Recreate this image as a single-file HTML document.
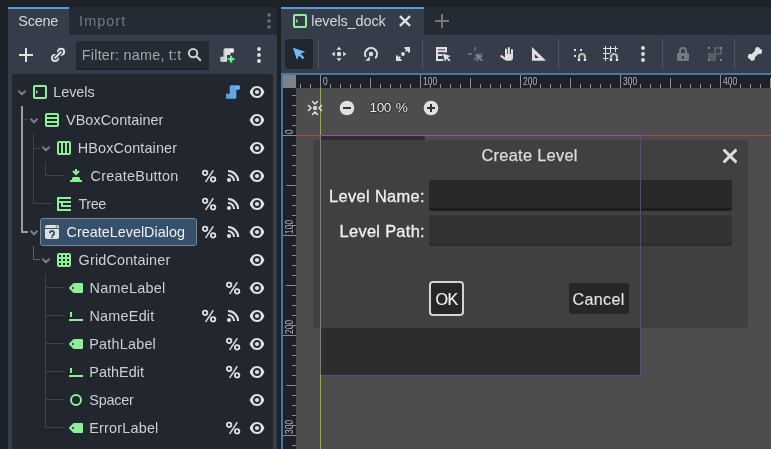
<!DOCTYPE html>
<html><head><meta charset="utf-8"><title>levels_dock</title>
<style>
html,body{margin:0;padding:0}
body{width:771px;height:449px;overflow:hidden;background:#1d2229;position:relative;font-family:"Liberation Sans",sans-serif;color:#cdcfd2}
.a{position:absolute}
.ic{position:absolute;overflow:visible}
.tl{position:absolute;font-size:14.6px;line-height:22px;white-space:nowrap;color:#cdcfd2}
.selt{color:#eef0f3}
.sel{position:absolute;box-sizing:border-box;background:#36506b;border:1px solid #7c8590;border-radius:3px}
.ln{position:absolute;background:#3f444c}
.lb{position:absolute;background:#9a9da2}
.lm{position:absolute;background:#5d6168}
.sep{position:absolute;width:1px;top:39px;height:30px;background:#4e5563}
.tk{position:absolute;background:#8b8d91}
.rn{position:absolute;font-size:10.300px;line-height:10px;color:#b4b6ba}
#w{position:absolute;left:0;top:0;width:771px;height:449px;will-change:transform}
</style></head><body><div id="w">

<!-- left dock -->
<div class="a" style="left:8px;top:7px;width:269px;height:28px;background:#252b34;border-radius:3px 3px 0 0"></div>
<div class="a" style="left:8px;top:35px;width:269px;height:414px;background:#363d4a"></div>
<div class="a" style="left:8px;top:7px;width:61px;height:28px;background:#363d4a;border-top:2px solid #5b9bd8;box-sizing:border-box"></div>
<span class="a" style="left:18.3px;top:11.0px;font-size:14.4px;line-height:20px;letter-spacing:-0.225px;color:#d6d8db;white-space:nowrap;">Scene</span>
<span class="a" style="left:79.1px;top:11.0px;font-size:14.4px;line-height:20px;letter-spacing:1.06px;color:#747982;white-space:nowrap;">Import</span>
<svg class="ic" style="left:261px;top:13px" width="16" height="16" viewBox="0 0 16 16"><circle cx="8" cy="2" r="1.800" fill="#6d7178"/><circle cx="8" cy="8" r="1.800" fill="#6d7178"/><circle cx="8" cy="14" r="1.800" fill="#6d7178"/></svg>

<!-- scene toolbar -->
<svg class="ic" style="left:18px;top:47px" width="16" height="16" viewBox="0 0 16 16"><path d="M7 1v6H1v2h6v6h2V9h6V7H9V1z" fill="#e0e0e0"/></svg>
<svg class="ic" style="left:50px;top:47px" width="16" height="16" viewBox="0 0 16 16"><g fill="none" stroke-linecap="round"><circle cx="11.100" cy="4.800" r="3" stroke="#e0e0e0" stroke-width="2"/><circle cx="5" cy="11" r="3" stroke="#e0e0e0" stroke-width="2"/><path d="M5.300 10.700 10.800 5.100" stroke="#363d4a" stroke-width="4.200"/><path d="M5.300 10.700 10.800 5.100" stroke="#e0e0e0" stroke-width="2"/></g></svg>
<div class="a" style="left:76px;top:41px;width:133px;height:29px;background:#252b34;border-radius:3px 3px 2px 2px;border-bottom:2px solid #1e232b;box-sizing:border-box"></div>
<span class="a" style="left:81.8px;top:45.0px;font-size:14.4px;line-height:20px;letter-spacing:0.219px;color:#a3a6ac;white-space:nowrap;">Filter: name, t:t</span>
<svg class="ic" style="left:187px;top:47px" width="16" height="16" viewBox="0 0 16 16"><circle cx="6.100" cy="6.100" r="4.200" fill="none" stroke="#cfd1d4" stroke-width="2"/><path d="M9.300 9.300 13.300 13.300" stroke="#cfd1d4" stroke-width="2" stroke-linecap="round"/></svg>
<svg class="ic" style="left:219px;top:47px" width="16" height="16" viewBox="0 0 16 16"><path d="M6.200 1.300H13.800a1.200 1.200 0 0 1 1.200 1.200V5.500H11.400V8H8v6.700H2.600a1.200 1.200 0 0 1-1.200-1.200V9.800H4.700V2.800a1.500 1.500 0 0 1 1.500-1.500z" fill="#e0e0e0"/><path d="M11.400 2.500h2.400v3h-2.400z" fill="#f6f6f6"/><path d="M4.700 2.800v9.900h1.700V2.300z" fill="#cdcdcd"/><path d="M2.600 11h2.100v2.500h-2.100z" fill="#bdbdbd"/><path d="M11 8.800v2.200H8.800v2.200H11v2.200h2.200v-2.200h2.200v-2.200h-2.200V8.800z" fill="#66f07c"/></svg>
<svg class="ic" style="left:251px;top:47px" width="16" height="16" viewBox="0 0 16 16"><circle cx="8" cy="2" r="1.900" fill="#e0e0e0"/><circle cx="8" cy="8" r="1.900" fill="#e0e0e0"/><circle cx="8" cy="14" r="1.900" fill="#e0e0e0"/></svg>

<!-- tree -->
<div class="a" style="left:12px;top:74px;width:261px;height:380px;background:#21262f;border-radius:3px"></div>
<!-- relationship lines -->
<div class="lb" style="left:21px;top:106px;width:2px;height:127px"></div>
<div class="lb" style="left:21px;top:231px;width:7px;height:2px"></div>
<div class="ln" style="left:23px;top:119px;width:5px;height:1px"></div>
<div class="ln" style="left:33px;top:134px;width:1px;height:70px"></div>
<div class="ln" style="left:33px;top:148px;width:7px;height:1px"></div>
<div class="ln" style="left:33px;top:203px;width:19px;height:1px"></div>
<div class="ln" style="left:45px;top:162px;width:1px;height:14px"></div>
<div class="ln" style="left:45px;top:175px;width:19px;height:1px"></div>
<div class="lm" style="left:33px;top:246px;width:1px;height:14px"></div>
<div class="lm" style="left:33px;top:259px;width:7px;height:1px"></div>
<div class="ln" style="left:45px;top:274px;width:1px;height:154px"></div>
<div class="ln" style="left:45px;top:287px;width:19px;height:1px"></div>
<div class="ln" style="left:45px;top:315px;width:19px;height:1px"></div>
<div class="ln" style="left:45px;top:343px;width:19px;height:1px"></div>
<div class="ln" style="left:45px;top:371px;width:19px;height:1px"></div>
<div class="ln" style="left:45px;top:399px;width:19px;height:1px"></div>
<div class="ln" style="left:45px;top:427px;width:19px;height:1px"></div>
<svg class="ic" style="left:14px;top:84px" width="16" height="16" viewBox="0 0 16 16"><path d="M5 7.200 8 10.200l3-3" fill="none" stroke="#7b7f86" stroke-width="2" stroke-linecap="round" stroke-linejoin="round"/></svg>
<svg class="ic" style="left:32px;top:84px" width="16" height="16" viewBox="0 0 16 16" ><path d="M3 1a2 2 0 0 0-2 2v10a2 2 0 0 0 2 2h10a2 2 0 0 0 2-2V3a2 2 0 0 0-2-2zm0 2h10v10H3zm1 3v4l2-2z" fill="#8eef97"/></svg>
<span class="a" style="left:53.3px;top:82.0px;font-size:14.4px;line-height:20px;letter-spacing:-0.06px;color:#cdcfd2;white-space:nowrap;">Levels</span>
<svg class="ic" style="left:249px;top:84px" width="16" height="16" viewBox="0 0 16 16" ><path d="M8 2C4.600 2 2.200 4.300 .8 7.600a1 1 0 0 0 0 .8C2.200 11.700 4.600 14 8 14s5.800-2.300 7.200-5.600a1 1 0 0 0 0-.8C13.800 4.300 11.400 2 8 2zm0 2.100a3.900 3.900 0 0 1 0 7.800 3.900 3.900 0 0 1 0-7.800zm0 1.800a2.100 2.100 0 0 0 0 4.200 2.100 2.100 0 0 0 0-4.200z" fill="#e0e0e0"/></svg>
<svg class="ic" style="left:225px;top:84px" width="16" height="16" viewBox="0 0 16 16" ><path d="M6.200 1.300H13.800a1.200 1.200 0 0 1 1.200 1.200V5.500H11.400V13.200a1.500 1.500 0 0 1-1.500 1.500H2.200a1.200 1.200 0 0 1-1.200-1.200V9.800H4.700V2.800a1.500 1.500 0 0 1 1.500-1.500z" fill="#5fa8e6"/><path d="M11.400 2.500h2.400v3h-2.400z" fill="#7dbcf2"/><path d="M2.200 11h2.500v2.500h-2.500z" fill="#4f93cf"/></svg>
<svg class="ic" style="left:26px;top:112px" width="16" height="16" viewBox="0 0 16 16"><path d="M5 7.200 8 10.200l3-3" fill="none" stroke="#7b7f86" stroke-width="2" stroke-linecap="round" stroke-linejoin="round"/></svg>
<svg class="ic" style="left:44px;top:112px" width="16" height="16" viewBox="0 0 16 16" ><path d="M3 1a2 2 0 0 0-2 2v10a2 2 0 0 0 2 2h10a2 2 0 0 0 2-2V3a2 2 0 0 0-2-2zm0 2h10v2H3zm0 4h10v2H3zm0 4h10v2H3z" fill="#8eef97"/></svg>
<span class="a" style="left:66.1px;top:110.0px;font-size:14.4px;line-height:20px;letter-spacing:0.042px;color:#cdcfd2;white-space:nowrap;">VBoxContainer</span>
<svg class="ic" style="left:249px;top:112px" width="16" height="16" viewBox="0 0 16 16" ><path d="M8 2C4.600 2 2.200 4.300 .8 7.600a1 1 0 0 0 0 .8C2.200 11.700 4.600 14 8 14s5.800-2.300 7.200-5.600a1 1 0 0 0 0-.8C13.800 4.300 11.400 2 8 2zm0 2.100a3.900 3.900 0 0 1 0 7.800 3.900 3.900 0 0 1 0-7.800zm0 1.800a2.100 2.100 0 0 0 0 4.200 2.100 2.100 0 0 0 0-4.200z" fill="#e0e0e0"/></svg>
<svg class="ic" style="left:38px;top:140px" width="16" height="16" viewBox="0 0 16 16"><path d="M5 7.200 8 10.200l3-3" fill="none" stroke="#7b7f86" stroke-width="2" stroke-linecap="round" stroke-linejoin="round"/></svg>
<svg class="ic" style="left:56px;top:140px" width="16" height="16" viewBox="0 0 16 16" ><path d="M3 1a2 2 0 0 0-2 2v10a2 2 0 0 0 2 2h10a2 2 0 0 0 2-2V3a2 2 0 0 0-2-2zm0 2h2v10H3zm4 0h2v10H7zm4 0h2v10h-2z" fill="#8eef97"/></svg>
<span class="a" style="left:77.8px;top:138.0px;font-size:14.4px;line-height:20px;letter-spacing:0.133px;color:#cdcfd2;white-space:nowrap;">HBoxContainer</span>
<svg class="ic" style="left:249px;top:140px" width="16" height="16" viewBox="0 0 16 16" ><path d="M8 2C4.600 2 2.200 4.300 .8 7.600a1 1 0 0 0 0 .8C2.200 11.700 4.600 14 8 14s5.800-2.300 7.200-5.600a1 1 0 0 0 0-.8C13.800 4.300 11.400 2 8 2zm0 2.100a3.900 3.900 0 0 1 0 7.800 3.900 3.900 0 0 1 0-7.800zm0 1.800a2.100 2.100 0 0 0 0 4.200 2.100 2.100 0 0 0 0-4.200z" fill="#e0e0e0"/></svg>
<svg class="ic" style="left:68px;top:168px" width="16" height="16" viewBox="0 0 16 16" ><path d="M7 1v2.586L5.707 2.293 4.293 3.707 8 7.414l3.707-3.707-1.414-1.414L9 3.586V1zM5.500 9A1.500 1.500 0 0 0 4 10.500V12H2.500a.5.500 0 0 0-.5.500V14h12v-1.500a.5.500 0 0 0-.5-.5H12v-1.500A1.500 1.500 0 0 0 10.500 9z" fill="#8eef97"/></svg>
<span class="a" style="left:90.5px;top:166.0px;font-size:14.4px;line-height:20px;letter-spacing:0.273px;color:#cdcfd2;white-space:nowrap;">CreateButton</span>
<svg class="ic" style="left:249px;top:168px" width="16" height="16" viewBox="0 0 16 16" ><path d="M8 2C4.600 2 2.200 4.300 .8 7.600a1 1 0 0 0 0 .8C2.200 11.700 4.600 14 8 14s5.800-2.300 7.200-5.600a1 1 0 0 0 0-.8C13.800 4.300 11.400 2 8 2zm0 2.100a3.900 3.900 0 0 1 0 7.800 3.900 3.900 0 0 1 0-7.800zm0 1.800a2.100 2.100 0 0 0 0 4.200 2.100 2.100 0 0 0 0-4.200z" fill="#e0e0e0"/></svg>
<svg class="ic" style="left:225px;top:168px" width="16" height="16" viewBox="0 0 16 16" ><path d="M3 2v2a9 9 0 0 1 9 9h2.200A11.200 11.200 0 0 0 3 2zm0 4v2a5 5 0 0 1 5 5h2.100a7.100 7.100 0 0 0-7.100-7z" fill="#e0e0e0"/><circle cx="4" cy="12" r="2.100" fill="#e0e0e0"/></svg>
<svg class="ic" style="left:201px;top:168px" width="16" height="16" viewBox="0 0 16 16" ><path d="M11.600 2.100 13 2.600 5.300 14.300 3.900 13.800z" fill="#e0e0e0"/><circle cx="4.100" cy="4.800" r="2.250" fill="none" stroke="#e0e0e0" stroke-width="1.800"/><circle cx="12.100" cy="11.300" r="2.250" fill="none" stroke="#e0e0e0" stroke-width="1.800"/></svg>
<svg class="ic" style="left:56px;top:196px" width="16" height="16" viewBox="0 0 16 16" ><path d="M1 1v14h14v-2H3V7h2v4h10V9H7V7h8V5H3V3h12V1z" fill="#8eef97"/></svg>
<span class="a" style="left:78.4px;top:194.0px;font-size:14.4px;line-height:20px;letter-spacing:-0.4px;color:#cdcfd2;white-space:nowrap;">Tree</span>
<svg class="ic" style="left:249px;top:196px" width="16" height="16" viewBox="0 0 16 16" ><path d="M8 2C4.600 2 2.200 4.300 .8 7.600a1 1 0 0 0 0 .8C2.200 11.700 4.600 14 8 14s5.800-2.300 7.200-5.600a1 1 0 0 0 0-.8C13.800 4.300 11.400 2 8 2zm0 2.100a3.900 3.900 0 0 1 0 7.800 3.900 3.900 0 0 1 0-7.800zm0 1.800a2.100 2.100 0 0 0 0 4.200 2.100 2.100 0 0 0 0-4.200z" fill="#e0e0e0"/></svg>
<svg class="ic" style="left:225px;top:196px" width="16" height="16" viewBox="0 0 16 16" ><path d="M3 2v2a9 9 0 0 1 9 9h2.200A11.200 11.200 0 0 0 3 2zm0 4v2a5 5 0 0 1 5 5h2.100a7.100 7.100 0 0 0-7.100-7z" fill="#e0e0e0"/><circle cx="4" cy="12" r="2.100" fill="#e0e0e0"/></svg>
<svg class="ic" style="left:201px;top:196px" width="16" height="16" viewBox="0 0 16 16" ><path d="M11.600 2.100 13 2.600 5.300 14.300 3.900 13.800z" fill="#e0e0e0"/><circle cx="4.100" cy="4.800" r="2.250" fill="none" stroke="#e0e0e0" stroke-width="1.800"/><circle cx="12.100" cy="11.300" r="2.250" fill="none" stroke="#e0e0e0" stroke-width="1.800"/></svg>
<div class="sel" style="left:40px;top:218px;width:157px;height:28px"></div>
<svg class="ic" style="left:26px;top:224px" width="16" height="16" viewBox="0 0 16 16"><path d="M5 7.200 8 10.200l3-3" fill="none" stroke="#7b7f86" stroke-width="2" stroke-linecap="round" stroke-linejoin="round"/></svg>
<svg class="ic" style="left:44px;top:224px" width="16" height="16" viewBox="0 0 16 16" ><path d="M3 1a2 2 0 0 0-2 2v1h14V3a2 2 0 0 0-2-2zM1 5v8a2 2 0 0 0 2 2h10a2 2 0 0 0 2-2V5z" fill="#e0e0e0"/><circle cx="12.400" cy="2.500" r=".8" fill="#36506b"/><path d="M5.900 9.200a2.100 2.100 0 1 1 3.500 1.500C8.600 11.300 8 11.600 8 12.400" fill="none" stroke="#36506b" stroke-width="1.900"/><rect x="6.900" y="13" width="2.200" height="1" rx=".4" fill="#36506b"/></svg>
<span class="a" style="left:66.5px;top:222.0px;font-size:14.4px;line-height:20px;letter-spacing:0.0px;color:#eef0f3;white-space:nowrap;">CreateLevelDialog</span>
<svg class="ic" style="left:249px;top:224px" width="16" height="16" viewBox="0 0 16 16" ><path d="M8 2C4.600 2 2.200 4.300 .8 7.600a1 1 0 0 0 0 .8C2.200 11.700 4.600 14 8 14s5.800-2.300 7.200-5.600a1 1 0 0 0 0-.8C13.800 4.300 11.400 2 8 2zm0 2.100a3.900 3.900 0 0 1 0 7.800 3.900 3.900 0 0 1 0-7.800zm0 1.800a2.100 2.100 0 0 0 0 4.200 2.100 2.100 0 0 0 0-4.200z" fill="#e0e0e0"/></svg>
<svg class="ic" style="left:225px;top:224px" width="16" height="16" viewBox="0 0 16 16" ><path d="M3 2v2a9 9 0 0 1 9 9h2.200A11.200 11.200 0 0 0 3 2zm0 4v2a5 5 0 0 1 5 5h2.100a7.100 7.100 0 0 0-7.100-7z" fill="#e0e0e0"/><circle cx="4" cy="12" r="2.100" fill="#e0e0e0"/></svg>
<svg class="ic" style="left:201px;top:224px" width="16" height="16" viewBox="0 0 16 16" ><path d="M11.600 2.100 13 2.600 5.300 14.300 3.900 13.800z" fill="#e0e0e0"/><circle cx="4.100" cy="4.800" r="2.250" fill="none" stroke="#e0e0e0" stroke-width="1.800"/><circle cx="12.100" cy="11.300" r="2.250" fill="none" stroke="#e0e0e0" stroke-width="1.800"/></svg>
<svg class="ic" style="left:38px;top:252px" width="16" height="16" viewBox="0 0 16 16"><path d="M5 7.200 8 10.200l3-3" fill="none" stroke="#7b7f86" stroke-width="2" stroke-linecap="round" stroke-linejoin="round"/></svg>
<svg class="ic" style="left:56px;top:252px" width="16" height="16" viewBox="0 0 16 16" ><path d="M3 1a2 2 0 0 0-2 2v10a2 2 0 0 0 2 2h10a2 2 0 0 0 2-2V3a2 2 0 0 0-2-2zm0 2h2v2H3zm4 0h2v2H7zm4 0h2v2h-2zM3 7h2v2H3zm4 0h2v2H7zm4 0h2v2h-2zm-8 4h2v2H3zm4 0h2v2H7zm4 0h2v2h-2z" fill="#8eef97"/></svg>
<span class="a" style="left:78.6px;top:250.0px;font-size:14.4px;line-height:20px;letter-spacing:0.167px;color:#cdcfd2;white-space:nowrap;">GridContainer</span>
<svg class="ic" style="left:249px;top:252px" width="16" height="16" viewBox="0 0 16 16" ><path d="M8 2C4.600 2 2.200 4.300 .8 7.600a1 1 0 0 0 0 .8C2.200 11.700 4.600 14 8 14s5.800-2.300 7.200-5.600a1 1 0 0 0 0-.8C13.800 4.300 11.400 2 8 2zm0 2.100a3.900 3.900 0 0 1 0 7.800 3.900 3.900 0 0 1 0-7.800zm0 1.800a2.100 2.100 0 0 0 0 4.200 2.100 2.100 0 0 0 0-4.200z" fill="#e0e0e0"/></svg>
<svg class="ic" style="left:68px;top:280px" width="16" height="16" viewBox="0 0 16 16" ><path d="M6 3a1 1 0 0 0-.707.293l-4 4a1 1 0 0 0 0 1.414l4 4A1 1 0 0 0 6 13h8a1 1 0 0 0 1-1V4a1 1 0 0 0-1-1zM5 7a1 1 0 0 1 0 2 1 1 0 0 1 0-2z" fill="#8eef97"/></svg>
<span class="a" style="left:89.5px;top:278.0px;font-size:14.4px;line-height:20px;letter-spacing:0.25px;color:#cdcfd2;white-space:nowrap;">NameLabel</span>
<svg class="ic" style="left:249px;top:280px" width="16" height="16" viewBox="0 0 16 16" ><path d="M8 2C4.600 2 2.200 4.300 .8 7.600a1 1 0 0 0 0 .8C2.200 11.700 4.600 14 8 14s5.800-2.300 7.200-5.600a1 1 0 0 0 0-.8C13.800 4.300 11.400 2 8 2zm0 2.100a3.900 3.900 0 0 1 0 7.800 3.900 3.900 0 0 1 0-7.800zm0 1.800a2.100 2.100 0 0 0 0 4.200 2.100 2.100 0 0 0 0-4.200z" fill="#e0e0e0"/></svg>
<svg class="ic" style="left:225px;top:280px" width="16" height="16" viewBox="0 0 16 16" ><path d="M11.600 2.100 13 2.600 5.300 14.300 3.900 13.800z" fill="#e0e0e0"/><circle cx="4.100" cy="4.800" r="2.250" fill="none" stroke="#e0e0e0" stroke-width="1.800"/><circle cx="12.100" cy="11.300" r="2.250" fill="none" stroke="#e0e0e0" stroke-width="1.800"/></svg>
<svg class="ic" style="left:68px;top:308px" width="16" height="16" viewBox="0 0 16 16" ><path d="M2 4v5h2V4zM1 11v2h14v-2z" fill="#8eef97"/></svg>
<span class="a" style="left:89.5px;top:306.0px;font-size:14.4px;line-height:20px;letter-spacing:0.229px;color:#cdcfd2;white-space:nowrap;">NameEdit</span>
<svg class="ic" style="left:249px;top:308px" width="16" height="16" viewBox="0 0 16 16" ><path d="M8 2C4.600 2 2.200 4.300 .8 7.600a1 1 0 0 0 0 .8C2.200 11.700 4.600 14 8 14s5.800-2.300 7.200-5.600a1 1 0 0 0 0-.8C13.800 4.300 11.400 2 8 2zm0 2.100a3.900 3.900 0 0 1 0 7.800 3.900 3.900 0 0 1 0-7.800zm0 1.800a2.100 2.100 0 0 0 0 4.200 2.100 2.100 0 0 0 0-4.200z" fill="#e0e0e0"/></svg>
<svg class="ic" style="left:225px;top:308px" width="16" height="16" viewBox="0 0 16 16" ><path d="M3 2v2a9 9 0 0 1 9 9h2.200A11.200 11.200 0 0 0 3 2zm0 4v2a5 5 0 0 1 5 5h2.100a7.100 7.100 0 0 0-7.100-7z" fill="#e0e0e0"/><circle cx="4" cy="12" r="2.100" fill="#e0e0e0"/></svg>
<svg class="ic" style="left:201px;top:308px" width="16" height="16" viewBox="0 0 16 16" ><path d="M11.600 2.100 13 2.600 5.300 14.300 3.900 13.800z" fill="#e0e0e0"/><circle cx="4.100" cy="4.800" r="2.250" fill="none" stroke="#e0e0e0" stroke-width="1.800"/><circle cx="12.100" cy="11.300" r="2.250" fill="none" stroke="#e0e0e0" stroke-width="1.800"/></svg>
<svg class="ic" style="left:68px;top:336px" width="16" height="16" viewBox="0 0 16 16" ><path d="M6 3a1 1 0 0 0-.707.293l-4 4a1 1 0 0 0 0 1.414l4 4A1 1 0 0 0 6 13h8a1 1 0 0 0 1-1V4a1 1 0 0 0-1-1zM5 7a1 1 0 0 1 0 2 1 1 0 0 1 0-2z" fill="#8eef97"/></svg>
<span class="a" style="left:89.3px;top:334.0px;font-size:14.4px;line-height:20px;letter-spacing:0.213px;color:#cdcfd2;white-space:nowrap;">PathLabel</span>
<svg class="ic" style="left:249px;top:336px" width="16" height="16" viewBox="0 0 16 16" ><path d="M8 2C4.600 2 2.200 4.300 .8 7.600a1 1 0 0 0 0 .8C2.200 11.700 4.600 14 8 14s5.800-2.300 7.200-5.600a1 1 0 0 0 0-.8C13.800 4.300 11.400 2 8 2zm0 2.100a3.900 3.900 0 0 1 0 7.800 3.900 3.900 0 0 1 0-7.800zm0 1.800a2.100 2.100 0 0 0 0 4.200 2.100 2.100 0 0 0 0-4.200z" fill="#e0e0e0"/></svg>
<svg class="ic" style="left:225px;top:336px" width="16" height="16" viewBox="0 0 16 16" ><path d="M11.600 2.100 13 2.600 5.300 14.300 3.900 13.800z" fill="#e0e0e0"/><circle cx="4.100" cy="4.800" r="2.250" fill="none" stroke="#e0e0e0" stroke-width="1.800"/><circle cx="12.100" cy="11.300" r="2.250" fill="none" stroke="#e0e0e0" stroke-width="1.800"/></svg>
<svg class="ic" style="left:68px;top:364px" width="16" height="16" viewBox="0 0 16 16" ><path d="M2 4v5h2V4zM1 11v2h14v-2z" fill="#8eef97"/></svg>
<span class="a" style="left:89.3px;top:362.0px;font-size:14.4px;line-height:20px;letter-spacing:0.043px;color:#cdcfd2;white-space:nowrap;">PathEdit</span>
<svg class="ic" style="left:249px;top:364px" width="16" height="16" viewBox="0 0 16 16" ><path d="M8 2C4.600 2 2.200 4.300 .8 7.600a1 1 0 0 0 0 .8C2.200 11.700 4.600 14 8 14s5.800-2.300 7.200-5.600a1 1 0 0 0 0-.8C13.800 4.300 11.400 2 8 2zm0 2.100a3.900 3.900 0 0 1 0 7.800 3.900 3.900 0 0 1 0-7.800zm0 1.800a2.100 2.100 0 0 0 0 4.200 2.100 2.100 0 0 0 0-4.200z" fill="#e0e0e0"/></svg>
<svg class="ic" style="left:225px;top:364px" width="16" height="16" viewBox="0 0 16 16" ><path d="M11.600 2.100 13 2.600 5.300 14.300 3.900 13.800z" fill="#e0e0e0"/><circle cx="4.100" cy="4.800" r="2.250" fill="none" stroke="#e0e0e0" stroke-width="1.800"/><circle cx="12.100" cy="11.300" r="2.250" fill="none" stroke="#e0e0e0" stroke-width="1.800"/></svg>
<svg class="ic" style="left:68px;top:392px" width="16" height="16" viewBox="0 0 16 16" ><path d="M8 2a6 6 0 0 0 0 12A6 6 0 0 0 8 2zm0 2a4 4 0 0 1 0 8 4 4 0 0 1 0-8z" fill="#8eef97"/></svg>
<span class="a" style="left:89.3px;top:390.0px;font-size:14.4px;line-height:20px;letter-spacing:-0.2px;color:#cdcfd2;white-space:nowrap;">Spacer</span>
<svg class="ic" style="left:249px;top:392px" width="16" height="16" viewBox="0 0 16 16" ><path d="M8 2C4.600 2 2.200 4.300 .8 7.600a1 1 0 0 0 0 .8C2.200 11.700 4.600 14 8 14s5.800-2.300 7.200-5.600a1 1 0 0 0 0-.8C13.800 4.300 11.400 2 8 2zm0 2.100a3.900 3.900 0 0 1 0 7.800 3.900 3.900 0 0 1 0-7.800zm0 1.800a2.100 2.100 0 0 0 0 4.200 2.100 2.100 0 0 0 0-4.200z" fill="#e0e0e0"/></svg>
<svg class="ic" style="left:68px;top:420px" width="16" height="16" viewBox="0 0 16 16" ><path d="M6 3a1 1 0 0 0-.707.293l-4 4a1 1 0 0 0 0 1.414l4 4A1 1 0 0 0 6 13h8a1 1 0 0 0 1-1V4a1 1 0 0 0-1-1zM5 7a1 1 0 0 1 0 2 1 1 0 0 1 0-2z" fill="#8eef97"/></svg>
<span class="a" style="left:89.3px;top:418.0px;font-size:14.4px;line-height:20px;letter-spacing:0.2px;color:#cdcfd2;white-space:nowrap;">ErrorLabel</span>
<svg class="ic" style="left:249px;top:420px" width="16" height="16" viewBox="0 0 16 16" ><path d="M8 2C4.600 2 2.200 4.300 .8 7.600a1 1 0 0 0 0 .8C2.200 11.700 4.600 14 8 14s5.800-2.300 7.200-5.600a1 1 0 0 0 0-.8C13.800 4.300 11.400 2 8 2zm0 2.100a3.900 3.900 0 0 1 0 7.800 3.900 3.900 0 0 1 0-7.800zm0 1.800a2.100 2.100 0 0 0 0 4.200 2.100 2.100 0 0 0 0-4.200z" fill="#e0e0e0"/></svg>
<svg class="ic" style="left:225px;top:420px" width="16" height="16" viewBox="0 0 16 16" ><path d="M11.600 2.100 13 2.600 5.300 14.300 3.900 13.800z" fill="#e0e0e0"/><circle cx="4.100" cy="4.800" r="2.250" fill="none" stroke="#e0e0e0" stroke-width="1.800"/><circle cx="12.100" cy="11.300" r="2.250" fill="none" stroke="#e0e0e0" stroke-width="1.800"/></svg>

<!-- main area -->
<div class="a" style="left:281px;top:7px;width:490px;height:28px;background:#252b34"></div>
<div class="a" style="left:281px;top:7px;width:143px;height:28px;background:#363d4a;border-top:2px solid #5b9bd8;box-sizing:border-box"></div>
<svg class="ic" style="left:292px;top:13px" width="16" height="16" viewBox="0 0 16 16"><path d="M3 1a2 2 0 0 0-2 2v10a2 2 0 0 0 2 2h10a2 2 0 0 0 2-2V3a2 2 0 0 0-2-2zm0 2h10v10H3zm1 3v4l2-2z" fill="#8eef97"/></svg>
<span class="a" style="left:311.3px;top:11.2px;font-size:14.4px;line-height:20px;letter-spacing:-0.08px;color:#d6d8db;white-space:nowrap;">levels_dock</span>
<svg class="ic" style="left:397px;top:13px" width="16" height="16" viewBox="0 0 16 16"><path d="M2.900 3.100 13.100 12.900M13.100 3.100 2.900 12.900" stroke="#e0e0e0" stroke-width="2.200" fill="none"/></svg>
<svg class="ic" style="left:434px;top:13px" width="16" height="16" viewBox="0 0 16 16"><path d="M7 1v6H1v2h6v6h2V9h6V7H9V1z" fill="#747678"/></svg>
<div class="a" style="left:281px;top:35px;width:490px;height:38px;background:#363d4a"></div>
<div class="a" style="left:285px;top:39px;width:28px;height:30px;background:#21262f;border-radius:3px"></div>
<!-- toolbar icons -->
<svg class="ic" style="left:291px;top:46px" width="16" height="16" viewBox="0 0 16 16"><path d="M2 1.800 6 14l1.900-4.600 3.800 3.800 1.700-1.700-3.800-3.800L14.200 5.800z" fill="#70bafa"/></svg>
<div class="sep" style="left:318px"></div>
<svg class="ic" style="left:331px;top:46px" width="16" height="16" viewBox="0 0 16 16"><path d="M8 .8 5.400 3.800h5.200zM8 15.200 10.600 12.200H5.400zM.8 8 3.800 10.600V5.400zM15.200 8 12.200 5.400v5.200z" fill="#e0e0e0"/><circle cx="8" cy="8" r="2.200" fill="#e0e0e0"/></svg>
<svg class="ic" style="left:363px;top:46px" width="16" height="16" viewBox="0 0 16 16"><path d="M2.800 11A6 6 0 1 1 12.240 12.240" fill="none" stroke="#e0e0e0" stroke-width="2"/><path d="M2.300 14.800H6.800V10.300z" fill="#e0e0e0"/><circle cx="8" cy="8" r="2.200" fill="#e0e0e0"/></svg>
<svg class="ic" style="left:395px;top:46px" width="16" height="16" viewBox="0 0 16 16"><path d="M9.500 1v2h2.100L10 4.600 11.400 6 13 4.400V6.500h2V1zM1 9.500V15h5.500v-2H4.400L6 11.400 4.600 10 3 11.600V9.500z" fill="#e0e0e0"/><circle cx="8" cy="8" r="1.900" fill="#e0e0e0"/></svg>
<div class="sep" style="left:422px"></div>
<svg class="ic" style="left:435px;top:46px" width="16" height="16" viewBox="0 0 16 16"><path d="M1 1h11v2.200H1zM1 1h2v14H1zM10 1h2v5.400h-2zM1 4.300h11v2H1zM1 8h7v2H1zM1 13h7.500v2H1z" fill="#e0e0e0"/><path d="M7.700 7.500l2.400 8.200 1.400-2.900 2.700 2.700 1.300-1.300-2.700-2.700 2.900-1.400z" fill="#e0e0e0" stroke="#363d4a" stroke-width="1.400" paint-order="stroke"/></svg>
<svg class="ic" style="left:467px;top:46px" width="16" height="16" viewBox="0 0 16 16"><path d="M7.200 1h1.700v4H7.200zM1 7.100h4v1.800H1zM11.500 7.100h3.700v1.800h-3.700zM7.200 11.200h1.700v3.600H7.200z" fill="#666b75"/><path d="M8.200 7.500l2.400 8.200 1.400-2.900 2.700 2.700 1.300-1.300-2.700-2.700 2.900-1.400z" fill="#7c818a" stroke="#363d4a" stroke-width="1.200" paint-order="stroke"/></svg>
<svg class="ic" style="left:499px;top:46px" width="16" height="16" viewBox="0 0 16 16"><path d="M6 8V3.600a1 1 0 0 1 2 0V8h.8V2.100a1 1 0 0 1 2 0V8H12V4a1 1 0 0 1 2 0v8c0 1.700-1.300 2.700-3 2.700H8c-1 0-1.700-.3-2.400-1L1.600 10.900a1.100 1.100 0 0 1 1.600-1.500L6 11.500z" fill="#e0e0e0"/></svg>
<svg class="ic" style="left:531px;top:46px" width="16" height="16" viewBox="0 0 16 16"><path d="M1 1V14.800H15zM3.800 8 7.900 12H3.800z" fill="#e0e0e0" fill-rule="evenodd"/></svg>
<div class="sep" style="left:558px"></div>
<svg class="ic" style="left:571px;top:46px" width="16" height="16" viewBox="0 0 16 16"><path d="M3 3h2v2H3zM9 3h2v2H9zM3 9h2v2H3z" fill="#e0e0e0"/><path d="M8 15v-4a3 3 0 0 1 6 0v4" fill="none" stroke="#b8b8b8" stroke-width="2.200"/><path d="M6.900 13h2.200v2H6.900zM12.900 13h2.200v2h-2.200z" fill="#f0f0f0"/></svg>
<svg class="ic" style="left:603px;top:46px" width="16" height="16" viewBox="0 0 16 16"><path d="M2 0h1v15H2zM7 0h1v7H7zM12 0h1v6h-1zM0 2h15v1H0zM0 7h7v1H0zM0 12h5.500v1H0z" fill="#e0e0e0"/><path d="M8 15v-4a3 3 0 0 1 6 0v4" fill="none" stroke="#b8b8b8" stroke-width="2.200"/><path d="M6.900 13h2.200v2H6.900zM12.900 13h2.200v2h-2.200z" fill="#f0f0f0"/></svg>
<svg class="ic" style="left:635px;top:46px" width="16" height="16" viewBox="0 0 16 16"><circle cx="8" cy="2" r="1.900" fill="#e0e0e0"/><circle cx="8" cy="8" r="1.900" fill="#e0e0e0"/><circle cx="8" cy="14" r="1.900" fill="#e0e0e0"/></svg>
<div class="sep" style="left:662px"></div>
<svg class="ic" style="left:675px;top:46px" width="16" height="16" viewBox="0 0 16 16"><path d="M8 1a4 4 0 0 0-4 4v2H3a1 1 0 0 0-1 1v6a1 1 0 0 0 1 1h10a1 1 0 0 0 1-1V8a1 1 0 0 0-1-1h-1V5a4 4 0 0 0-4-4zm0 2a2 2 0 0 1 2 2v2H6V5a2 2 0 0 1 2-2zM7 10h2v3H7z" fill="#747982" fill-rule="evenodd"/></svg>
<svg class="ic" style="left:707px;top:46px" width="16" height="16" viewBox="0 0 16 16"><path d="M7 1v6H1v8h8V9h6V1zm2 2h4v4H9z" fill="#565b66"/><path d="M1 1v2h2V1zm12 0v2h2V1zM1 13v2h2v-2zm12 0v2h2v-2z" fill="#7f848d"/></svg>
<div class="sep" style="left:734px"></div>
<svg class="ic" style="left:747px;top:46px" width="16" height="16" viewBox="0 0 16 16"><path d="M10.500 1a2.500 2.500 0 0 0-2.300 3.500L4.500 8.200A2.500 2.500 0 1 0 3 12.900a2.500 2.500 0 1 0 4.800-1.400l3.700-3.700A2.500 2.500 0 1 0 13 3.100 2.500 2.500 0 0 0 10.500 1z" fill="#e0e0e0"/></svg>

<!-- viewport -->
<div class="a" style="left:281px;top:73px;width:490px;height:376px;background:#4d4d4d"></div>
<div class="a" style="left:283px;top:75px;width:488px;height:13px;background:#1d2129"></div>
<div class="a" style="left:283px;top:75px;width:13px;height:374px;background:#1d2129"></div>
<div class="a" style="left:283px;top:75px;width:13px;height:13px;background:#7e8185"></div>
<div class="tk" style="left:300px;top:84px;width:1px;height:4px"></div>
<div class="tk" style="left:310px;top:84px;width:1px;height:4px"></div>
<div class="tk" style="left:320px;top:75px;width:1px;height:13px"></div>
<span class="rn" style="left:323.3px;top:76.600px;transform-origin:0 0;transform:scaleX(.82)">0</span>
<div class="tk" style="left:330px;top:84px;width:1px;height:4px"></div>
<div class="tk" style="left:340px;top:84px;width:1px;height:4px"></div>
<div class="tk" style="left:350px;top:84px;width:1px;height:4px"></div>
<div class="tk" style="left:360px;top:84px;width:1px;height:4px"></div>
<div class="tk" style="left:370px;top:78px;width:1px;height:10px"></div>
<div class="tk" style="left:380px;top:84px;width:1px;height:4px"></div>
<div class="tk" style="left:390px;top:84px;width:1px;height:4px"></div>
<div class="tk" style="left:400px;top:84px;width:1px;height:4px"></div>
<div class="tk" style="left:410px;top:84px;width:1px;height:4px"></div>
<div class="tk" style="left:420px;top:75px;width:1px;height:13px"></div>
<span class="rn" style="left:423.3px;top:76.600px;transform-origin:0 0;transform:scaleX(.82)">100</span>
<div class="tk" style="left:430px;top:84px;width:1px;height:4px"></div>
<div class="tk" style="left:440px;top:84px;width:1px;height:4px"></div>
<div class="tk" style="left:450px;top:84px;width:1px;height:4px"></div>
<div class="tk" style="left:460px;top:84px;width:1px;height:4px"></div>
<div class="tk" style="left:470px;top:78px;width:1px;height:10px"></div>
<div class="tk" style="left:480px;top:84px;width:1px;height:4px"></div>
<div class="tk" style="left:490px;top:84px;width:1px;height:4px"></div>
<div class="tk" style="left:500px;top:84px;width:1px;height:4px"></div>
<div class="tk" style="left:510px;top:84px;width:1px;height:4px"></div>
<div class="tk" style="left:520px;top:75px;width:1px;height:13px"></div>
<span class="rn" style="left:523.3px;top:76.600px;transform-origin:0 0;transform:scaleX(.82)">200</span>
<div class="tk" style="left:530px;top:84px;width:1px;height:4px"></div>
<div class="tk" style="left:540px;top:84px;width:1px;height:4px"></div>
<div class="tk" style="left:550px;top:84px;width:1px;height:4px"></div>
<div class="tk" style="left:560px;top:84px;width:1px;height:4px"></div>
<div class="tk" style="left:570px;top:78px;width:1px;height:10px"></div>
<div class="tk" style="left:580px;top:84px;width:1px;height:4px"></div>
<div class="tk" style="left:590px;top:84px;width:1px;height:4px"></div>
<div class="tk" style="left:600px;top:84px;width:1px;height:4px"></div>
<div class="tk" style="left:610px;top:84px;width:1px;height:4px"></div>
<div class="tk" style="left:620px;top:75px;width:1px;height:13px"></div>
<span class="rn" style="left:623.3px;top:76.600px;transform-origin:0 0;transform:scaleX(.82)">300</span>
<div class="tk" style="left:630px;top:84px;width:1px;height:4px"></div>
<div class="tk" style="left:640px;top:84px;width:1px;height:4px"></div>
<div class="tk" style="left:650px;top:84px;width:1px;height:4px"></div>
<div class="tk" style="left:660px;top:84px;width:1px;height:4px"></div>
<div class="tk" style="left:670px;top:78px;width:1px;height:10px"></div>
<div class="tk" style="left:680px;top:84px;width:1px;height:4px"></div>
<div class="tk" style="left:690px;top:84px;width:1px;height:4px"></div>
<div class="tk" style="left:700px;top:84px;width:1px;height:4px"></div>
<div class="tk" style="left:710px;top:84px;width:1px;height:4px"></div>
<div class="tk" style="left:720px;top:75px;width:1px;height:13px"></div>
<span class="rn" style="left:723.3px;top:76.600px;transform-origin:0 0;transform:scaleX(.82)">400</span>
<div class="tk" style="left:730px;top:84px;width:1px;height:4px"></div>
<div class="tk" style="left:740px;top:84px;width:1px;height:4px"></div>
<div class="tk" style="left:750px;top:84px;width:1px;height:4px"></div>
<div class="tk" style="left:760px;top:84px;width:1px;height:4px"></div>
<div class="tk" style="left:770px;top:78px;width:1px;height:10px"></div>
<div class="tk" style="left:292px;top:95px;width:4px;height:1px"></div>
<div class="tk" style="left:292px;top:105px;width:4px;height:1px"></div>
<div class="tk" style="left:292px;top:115px;width:4px;height:1px"></div>
<div class="tk" style="left:292px;top:125px;width:4px;height:1px"></div>
<div class="tk" style="left:283px;top:135px;width:13px;height:1px"></div>
<span class="rn" style="left:285.400px;top:133.8px;transform-origin:0 0;transform:rotate(-90deg) scaleX(.82)">0</span>
<div class="tk" style="left:292px;top:145px;width:4px;height:1px"></div>
<div class="tk" style="left:292px;top:155px;width:4px;height:1px"></div>
<div class="tk" style="left:292px;top:165px;width:4px;height:1px"></div>
<div class="tk" style="left:292px;top:175px;width:4px;height:1px"></div>
<div class="tk" style="left:286px;top:185px;width:10px;height:1px"></div>
<div class="tk" style="left:292px;top:195px;width:4px;height:1px"></div>
<div class="tk" style="left:292px;top:205px;width:4px;height:1px"></div>
<div class="tk" style="left:292px;top:215px;width:4px;height:1px"></div>
<div class="tk" style="left:292px;top:225px;width:4px;height:1px"></div>
<div class="tk" style="left:283px;top:235px;width:13px;height:1px"></div>
<span class="rn" style="left:285.400px;top:233.8px;transform-origin:0 0;transform:rotate(-90deg) scaleX(.82)">100</span>
<div class="tk" style="left:292px;top:245px;width:4px;height:1px"></div>
<div class="tk" style="left:292px;top:255px;width:4px;height:1px"></div>
<div class="tk" style="left:292px;top:265px;width:4px;height:1px"></div>
<div class="tk" style="left:292px;top:275px;width:4px;height:1px"></div>
<div class="tk" style="left:286px;top:285px;width:10px;height:1px"></div>
<div class="tk" style="left:292px;top:295px;width:4px;height:1px"></div>
<div class="tk" style="left:292px;top:305px;width:4px;height:1px"></div>
<div class="tk" style="left:292px;top:315px;width:4px;height:1px"></div>
<div class="tk" style="left:292px;top:325px;width:4px;height:1px"></div>
<div class="tk" style="left:283px;top:335px;width:13px;height:1px"></div>
<span class="rn" style="left:285.400px;top:333.8px;transform-origin:0 0;transform:rotate(-90deg) scaleX(.82)">200</span>
<div class="tk" style="left:292px;top:345px;width:4px;height:1px"></div>
<div class="tk" style="left:292px;top:355px;width:4px;height:1px"></div>
<div class="tk" style="left:292px;top:365px;width:4px;height:1px"></div>
<div class="tk" style="left:292px;top:375px;width:4px;height:1px"></div>
<div class="tk" style="left:286px;top:385px;width:10px;height:1px"></div>
<div class="tk" style="left:292px;top:395px;width:4px;height:1px"></div>
<div class="tk" style="left:292px;top:405px;width:4px;height:1px"></div>
<div class="tk" style="left:292px;top:415px;width:4px;height:1px"></div>
<div class="tk" style="left:292px;top:425px;width:4px;height:1px"></div>
<div class="tk" style="left:283px;top:435px;width:13px;height:1px"></div>
<span class="rn" style="left:285.400px;top:433.8px;transform-origin:0 0;transform:rotate(-90deg) scaleX(.82)">300</span>
<div class="tk" style="left:292px;top:445px;width:4px;height:1px"></div>
<!-- axes -->
<div class="a" style="left:320px;top:88px;width:1px;height:361px;background:#8abb24"></div>
<div class="a" style="left:296px;top:135px;width:475px;height:1px;background:#c8364d"></div>
<!-- window dark bg -->
<div class="a" style="left:321px;top:136px;width:104px;height:6px;background:#2d2d2d;border-radius:0 3px 0 0"></div>
<div class="a" style="left:321px;top:328px;width:319px;height:47px;background:#2d2d2d"></div>
<!-- viewport rect -->
<div class="a" style="left:321px;top:135px;width:319px;height:1px;background:#a848a8"></div>
<div class="a" style="left:640px;top:135px;width:1px;height:241px;background:#4e4e96"></div>
<div class="a" style="left:321px;top:375px;width:320px;height:1px;background:#4e4e96"></div>
<!-- dialog -->
<div class="a" style="left:313px;top:140px;width:435px;height:188px;background:#404040;border-radius:4px"></div>
<div class="a" style="left:320px;top:136px;width:1px;height:239px;background:#6c8c6c"></div>
<div class="a" style="left:640px;top:140px;width:1px;height:188px;background:#4e4e96"></div>
<span class="a" style="left:481.5px;top:145.0px;font-size:16.4px;line-height:20px;letter-spacing:0.273px;color:#dcdcdc;white-space:nowrap;-webkit-text-stroke:.25px #dcdcdc">Create Level</span>
<svg class="ic" style="left:722px;top:148px" width="16" height="16" viewBox="0 0 16 16"><path d="M2.500 2.500 13.500 13.500M13.500 2.500 2.500 13.500" stroke="#dcdcdc" stroke-width="3.100" stroke-linecap="round" fill="none"/></svg>
<span class="a" style="left:329.0px;top:185.7px;font-size:16.4px;line-height:20px;letter-spacing:0.36px;color:#f0f0f0;white-space:nowrap;-webkit-text-stroke:.3px #f0f0f0">Level Name:</span>
<span class="a" style="left:339.6px;top:220.8px;font-size:16.4px;line-height:20px;letter-spacing:0.3px;color:#f0f0f0;white-space:nowrap;-webkit-text-stroke:.3px #f0f0f0">Level Path:</span>
<div class="a" style="left:429px;top:180px;width:303px;height:31px;background:#282828;border-radius:3px;border-bottom:3px solid #1d1d1d;box-sizing:border-box"></div>
<div class="a" style="left:429px;top:215px;width:303px;height:31px;background:#333333;border-radius:3px;border-bottom:3px solid #2c2c2c;box-sizing:border-box"></div>
<div class="a" style="left:640px;top:180px;width:1px;height:66px;background:#4c4c90"></div>
<div class="a" style="left:429px;top:281px;width:35px;height:35px;background:#272727;border:2px solid #d2d2d2;border-radius:4px;box-sizing:border-box"></div>
<span class="a" style="left:435.4px;top:289.0px;font-size:16.2px;line-height:20px;letter-spacing:-0.6px;color:#f0f0f0;white-space:nowrap;-webkit-text-stroke:.15px #f0f0f0">OK</span>
<div class="a" style="left:569px;top:283px;width:60px;height:31px;background:#272727;border-radius:3px"></div>
<span class="a" style="left:572.5px;top:289.0px;font-size:16.2px;line-height:20px;letter-spacing:0.3px;color:#e4e4e4;white-space:nowrap;-webkit-text-stroke:.12px #e4e4e4">Cancel</span>

<!-- zoom controls -->
<svg class="ic" style="left:307px;top:100px" width="16" height="16" viewBox="0 0 16 16"><g fill="none" stroke="#e0e0e0" stroke-width="1.600" stroke-linecap="round" stroke-linejoin="round"><path d="M5.500 1.500 8 4l2.500-2.500M5.500 14.500 8 12l2.500 2.500M1.500 5.500 4 8l-2.500 2.500M14.500 5.500 12 8l2.500 2.500"/></g><rect x="6.200" y="6.200" width="3.600" height="3.600" fill="#e0e0e0"/></svg>
<svg class="ic" style="left:339px;top:100px" width="16" height="16" viewBox="0 0 16 16"><circle cx="8" cy="8" r="7.300" fill="#e0e0e0"/><rect x="4" y="7" width="8" height="2" fill="#333"/></svg>
<span class="a" style="left:369.5px;top:98.3px;font-size:13.6px;line-height:20px;letter-spacing:-0.4px;color:#f2f2f2;white-space:nowrap;word-spacing:1.500px;text-shadow:0 0 1px #000,0 0 2px #000">100 %</span>
<svg class="ic" style="left:423px;top:100px" width="16" height="16" viewBox="0 0 16 16"><circle cx="8" cy="8" r="7.300" fill="#e0e0e0"/><path d="M4 7h3V4h2v3h3v2H9v3H7V9H4z" fill="#333"/></svg>

<!-- focus border -->
<div class="a" style="left:281px;top:73px;width:490px;height:2px;background:#4a76a2"></div>
<div class="a" style="left:281px;top:73px;width:2px;height:376px;background:#4a76a2"></div>
</div></body></html>
